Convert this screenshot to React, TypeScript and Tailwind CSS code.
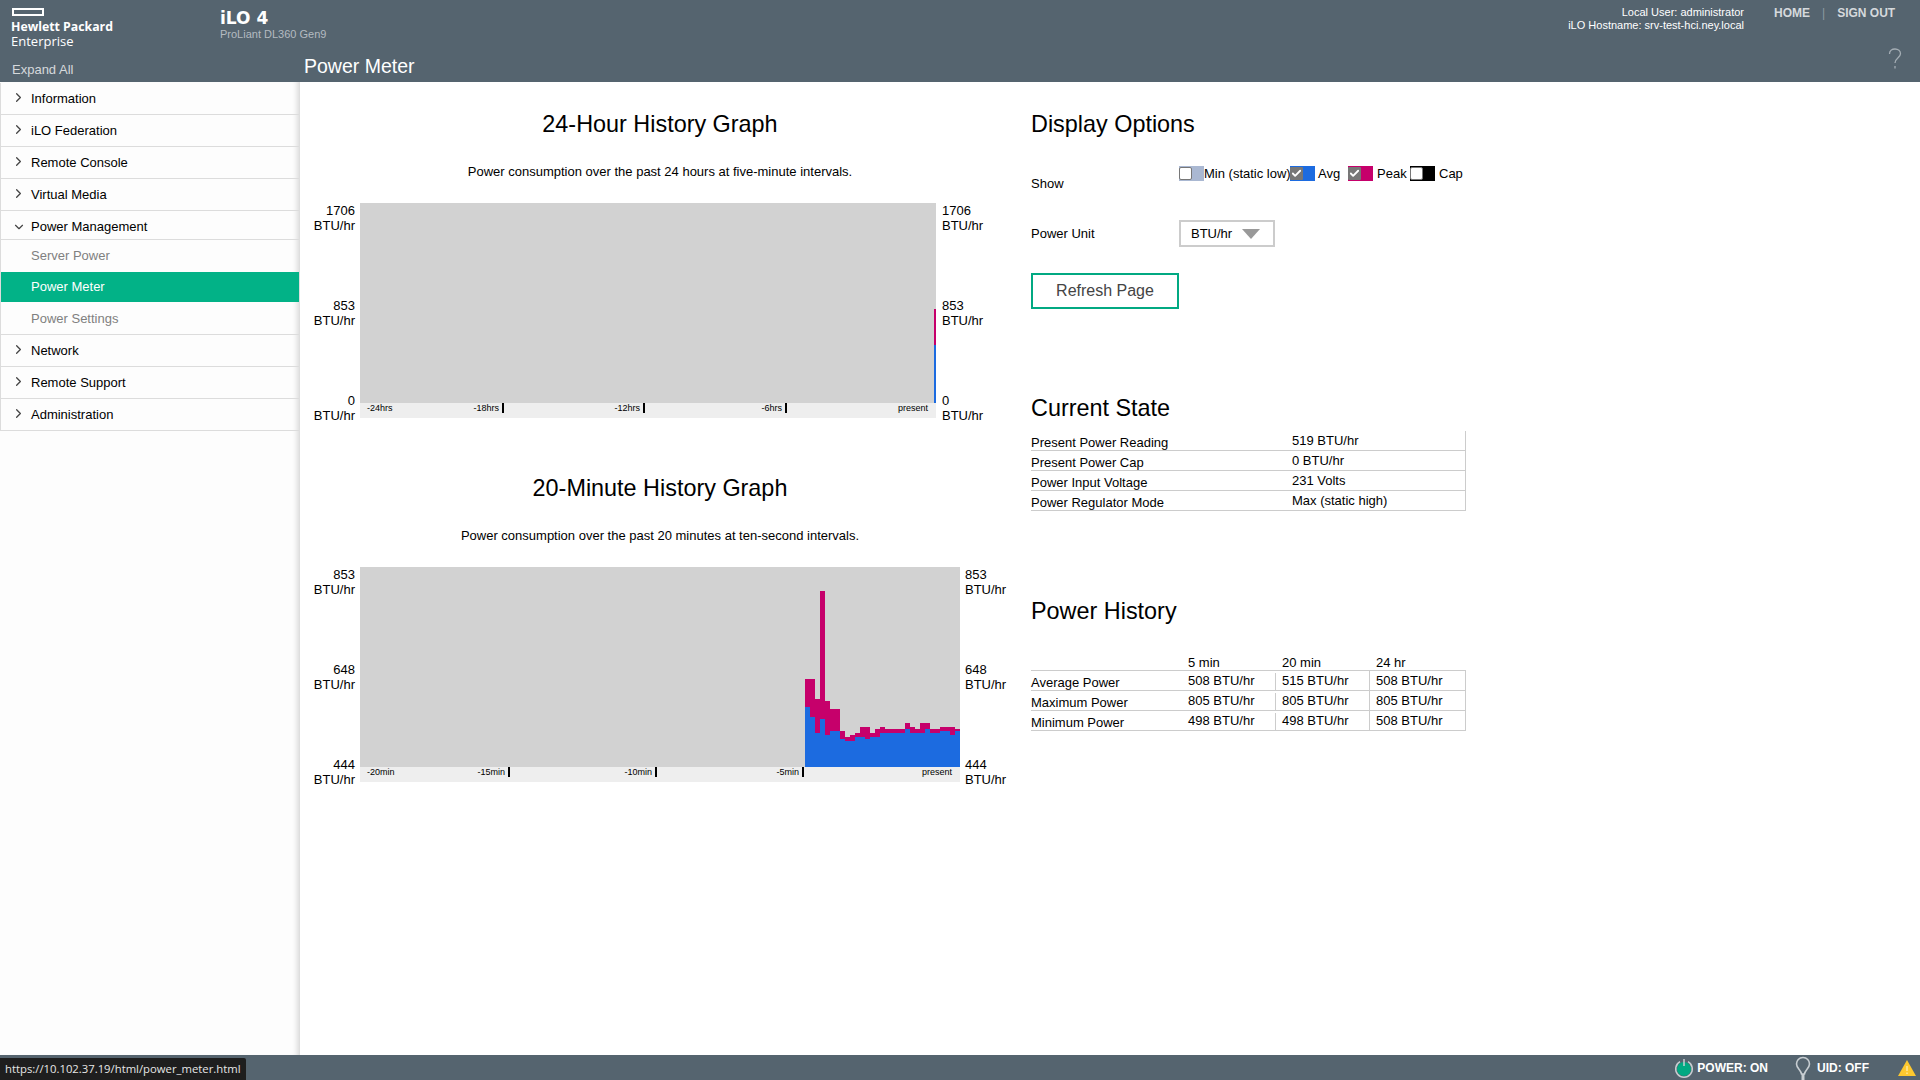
import React from "react";
import { ChevronDown, ChevronRight, Check } from "lucide-react";

const navTop = ["Information", "iLO Federation", "Remote Console", "Virtual Media"];
const navBottom = ["Network", "Remote Support", "Administration"];

// peak / avg heights of the 20 minute graph, 5px wide bars
const bars = [
  [88, 60], [88, 50], [68, 34], [176, 48], [66, 32], [58, 36], [58, 36], [36, 28],
  [30, 26], [32, 26], [34, 30], [40, 30], [40, 28], [34, 30], [38, 30], [40, 34],
  [38, 34], [38, 34], [38, 34], [38, 34], [44, 38], [40, 34], [38, 34], [44, 34],
  [44, 38], [38, 34], [38, 34], [40, 36], [40, 36], [40, 32], [38, 36],
];

const currentState = [
  ["Present Power Reading", "519 BTU/hr"],
  ["Present Power Cap", "0 BTU/hr"],
  ["Power Input Voltage", "231 Volts"],
  ["Power Regulator Mode", "Max (static high)"],
];

const powerHistory = [
  ["Average Power", "508 BTU/hr", "515 BTU/hr", "508 BTU/hr"],
  ["Maximum Power", "805 BTU/hr", "805 BTU/hr", "805 BTU/hr"],
  ["Minimum Power", "498 BTU/hr", "498 BTU/hr", "508 BTU/hr"],
];

function NavRow({ label }: { label: string }) {
  return (
    <div className="flex h-[32px] items-center border-b border-[#dcdcdc] text-black">
      <span className="flex w-[30px] justify-center pb-[3px] pl-[5px] text-[#444]">
        <ChevronRight size={15} />
      </span>
      <span>{label}</span>
    </div>
  );
}

function AxisLabels({ values, align }: { values: string[]; align: string }) {
  return (
    <div className={`flex h-[220px] flex-col justify-between leading-[15px] ${align}`}>
      {values.map((v) => (
        <div key={v}>
          {v}
          <br />
          BTU/hr
        </div>
      ))}
    </div>
  );
}

function TickCell({ label, width, first }: { label: string; width: string; first?: string }) {
  return (
    <div className={`flex h-[10px] items-center justify-between border-r-2 border-black pr-[3px] pl-[7px] ${width}`}>
      <span>{first}</span>
      <span>{label}</span>
    </div>
  );
}

function Graph24() {
  return (
    <div className="flex">
      <div className="w-[55px] text-right">
        <AxisLabels values={["1706", "853", "0"]} align="items-end" />
      </div>
      <div className="ml-[5px] w-[576px]">
        <div className="flex h-[200px] items-end justify-end bg-[#d2d2d2]">
          <div className="w-[2px]">
            <div className="h-[36px] bg-[#c6006b]" />
            <div className="h-[58px] bg-[#1c6be0]" />
          </div>
        </div>
        <div className="flex h-[15px] bg-[#eeeeee] text-[9px] leading-[10px]">
          <TickCell width="w-[144px]" first="-24hrs" label="-18hrs" />
          <TickCell width="w-[141px]" label="-12hrs" />
          <TickCell width="w-[142px]" label="-6hrs" />
          <div className="flex h-[10px] flex-1 items-center justify-end pr-[8px]">present</div>
        </div>
      </div>
      <div className="ml-[6px]">
        <AxisLabels values={["1706", "853", "0"]} align="items-start" />
      </div>
    </div>
  );
}

function Graph20() {
  return (
    <div className="flex">
      <div className="w-[55px] text-right">
        <AxisLabels values={["853", "648", "444"]} align="items-end" />
      </div>
      <div className="ml-[5px] w-[600px]">
        <div className="h-[200px] bg-[#d2d2d2]">
          <svg width="600" height="200" viewBox="0 0 600 200" className="block">
            {bars.map(([peak, avg], i) => (
              <g key={i}>
                <rect x={445 + i * 5} y={200 - peak} width="5" height={peak - avg} fill="#c6006b" />
                <rect x={445 + i * 5} y={200 - avg} width="5" height={avg} fill="#1c6be0" />
              </g>
            ))}
          </svg>
        </div>
        <div className="flex h-[15px] bg-[#eeeeee] text-[9px] leading-[10px]">
          <TickCell width="w-[150px]" first="-20min" label="-15min" />
          <TickCell width="w-[147px]" label="-10min" />
          <TickCell width="w-[147px]" label="-5min" />
          <div className="flex h-[10px] flex-1 items-center justify-end pr-[8px]">present</div>
        </div>
      </div>
      <div className="ml-[5px]">
        <AxisLabels values={["853", "648", "444"]} align="items-start" />
      </div>
    </div>
  );
}

function Legend({ label, swatch, checked, textClass }: { label: string; swatch: string; checked?: boolean; textClass: string }) {
  return (
    <>
      <span className={`flex h-[15px] w-[25px] shrink-0 items-center ${swatch}`}>
        {checked ? (
          <span className="flex h-[13px] w-[13px] items-center justify-center rounded-[1px] bg-[#777777] text-white">
            <Check size={11} strokeWidth={4} />
          </span>
        ) : (
          <span className="h-[13px] w-[13px] rounded-[2px] border border-[#777777] bg-white" />
        )}
      </span>
      <span className={`whitespace-nowrap ${textClass}`}>{label}</span>
    </>
  );
}

export default function App() {
  return (
    <div className="flex h-screen w-full flex-col overflow-hidden bg-white font-['Liberation_Sans',Arial,sans-serif] text-[13px] text-black">
      <header className="h-[82px] shrink-0 bg-[#55646f] text-white">
        <div className="flex h-[48px]">
          <div className="w-[220px] pt-[8px] pl-[11px]">
            <div className="ml-[1px] h-[8px] w-[32px] border-2 border-white" />
            <div className="mt-[4px] font-['Open_Sans',sans-serif] text-[12.3px] leading-[14px] font-bold">Hewlett Packard</div>
            <div className="font-['Open_Sans',sans-serif] text-[13px] leading-[14px]">Enterprise</div>
          </div>
          <div className="pt-[8px]">
            <div className="font-['DejaVu_Sans',sans-serif] text-[17px] leading-[20px] font-bold">iLO 4</div>
            <div className="text-[11px] leading-[13px] text-[#b4bbc1]">ProLiant DL360 Gen9</div>
          </div>
          <div className="ml-auto flex">
            <div className="pt-[6px] text-right text-[11px] leading-[13px]">
              <div>Local User: administrator</div>
              <div>iLO Hostname: srv-test-hci.ney.local</div>
            </div>
            <div className="ml-[30px] flex h-[25px] w-[146px] items-center text-[12px] font-bold text-[#d5d9dc]">
              <span>HOME</span>
              <span className="mx-[12px] font-normal text-[#8d99a2]">|</span>
              <span>SIGN OUT</span>
            </div>
          </div>
        </div>
        <div className="flex h-[34px] items-center">
          <div className="w-[300px] pt-[10px] pl-[12px] text-[13px] text-[#d5d9dc]">Expand All</div>
          <div className="pt-[3px] pl-[4px] text-[19.5px] text-white">Power Meter</div>
          <svg width="14" height="22" viewBox="0 0 14 22" className="mr-[18px] ml-auto self-start" fill="none" stroke="#a5aeb5" strokeWidth="1.3">
            <path d="M1.5 6 C1.5 2.8 4 1 7 1 C10 1 12.5 3 12.5 5.8 C12.5 9.5 7 10 7 15" />
            <path d="M7 18 V20.5" />
          </svg>
        </div>
      </header>

      <div className="flex min-h-0 flex-1">
        <aside className="w-[300px] shrink-0 bg-[#fdfdfd] pt-[1px] shadow-[inset_-7px_0_6px_-5px_rgba(0,0,0,0.18)]">
          <div className="w-[299px] border-l border-[#dcdcdc]">
            {navTop.map((n) => (
              <NavRow key={n} label={n} />
            ))}
            <div className="flex h-[29px] items-center border-b border-[#dcdcdc] pt-[3px]">
              <span className="flex w-[30px] justify-center pl-[5px] text-[#444]">
                <ChevronDown size={14} className="mt-[1px]" />
              </span>
              <span>Power Management</span>
            </div>
            <div className="flex h-[32px] items-center pl-[30px] text-[#808080]">Server Power</div>
            <div className="flex h-[30px] items-center bg-[#02b287] pl-[30px] text-white">Power Meter</div>
            <div className="flex h-[33px] items-center border-b border-[#dcdcdc] pt-[1px] pl-[30px] text-[#808080]">Power Settings</div>
            {navBottom.map((n) => (
              <NavRow key={n} label={n} />
            ))}
          </div>
        </aside>

        <main className="flex min-w-0 flex-1 pt-[22px]">
          <div className="w-[720px] shrink-0">
            <section className="h-[364px]">
              <h2 className="h-[40px] text-center text-[23.4px] leading-[40px]">24-Hour History Graph</h2>
              <p className="mt-[18px] h-[20px] text-center leading-[20px]">Power consumption over the past 24 hours at five-minute intervals.</p>
              <div className="mt-[21px]">
                <Graph24 />
              </div>
            </section>
            <section>
              <h2 className="h-[40px] text-center text-[23.4px] leading-[40px]">20-Minute History Graph</h2>
              <p className="mt-[18px] h-[20px] text-center leading-[20px]">Power consumption over the past 20 minutes at ten-second intervals.</p>
              <div className="mt-[21px]">
                <Graph20 />
              </div>
            </section>
          </div>

          <div className="ml-[11px] w-[435px]">
            <h2 className="h-[40px] text-[23.4px] leading-[40px]">Display Options</h2>
            <div className="mt-[20px] flex h-[38px]">
              <div className="w-[148px] pt-[12px] leading-[15px]">Show</div>
              <div className="flex h-[19px] items-center leading-[15px]">
                <Legend label="Min (static low)" swatch="bg-[#aab8d2]" textClass="w-[86px]" />
                <Legend label="Avg" swatch="bg-[#1c6be0]" checked textClass="w-[33px] pl-[3px]" />
                <Legend label="Peak" swatch="bg-[#c6006b]" checked textClass="w-[37px] pl-[4px]" />
                <Legend label="Cap" swatch="bg-black" textClass="pl-[4px]" />
              </div>
            </div>
            <div className="mt-[18px] flex h-[27px] items-center">
              <div className="w-[148px] pt-[1px]">Power Unit</div>
              <div className="flex h-[27px] w-[96px] items-center border-2 border-[#cccccc] pl-[10px]">
                <span>BTU/hr</span>
                <span className="ml-[10px] h-0 w-0 border-x-[9px] border-t-[10px] border-x-transparent border-t-[#999999]" />
              </div>
            </div>
            <button className="mt-[26px] h-[36px] w-[148px] border-[2px] border-[#01a982] bg-white text-[16px] text-[#444444]">Refresh Page</button>

            <h2 className="mt-[79px] h-[40px] text-[23.4px] leading-[40px]">Current State</h2>
            <div className="mt-[3px] border-r border-[#cccccc]">
              {currentState.map(([k, v]) => (
                <div key={k} className="flex h-[20px] border-b border-[#cccccc] leading-[15px]">
                  <span className="w-[261px] self-end">{k}</span>
                  <span className="mt-[2px]">{v}</span>
                </div>
              ))}
            </div>

            <h2 className="mt-[80px] h-[40px] text-[23.4px] leading-[40px]">Power History</h2>
            <div className="mt-[20px] flex h-[20px] items-center border-b border-[#cccccc] pt-[3px] leading-[15px]">
              <span className="w-[157px]" />
              <span className="w-[94px]">5 min</span>
              <span className="w-[94px]">20 min</span>
              <span>24 hr</span>
            </div>
            <div className="border-r border-[#cccccc]">
              {powerHistory.map(([k, a, b, c]) => (
                <div key={k} className="flex h-[20px] border-b border-[#cccccc] leading-[15px]">
                  <span className="w-[157px] self-end">{k}</span>
                  <span className="mt-[2px] h-[17px] w-[88px] border-r border-[#cccccc]">{a}</span>
                  <span className="h-[19px] w-[94px] border-r border-[#cccccc] pt-[2px] pl-[6px]">{b}</span>
                  <span className="mt-[2px] pl-[6px]">{c}</span>
                </div>
              ))}
            </div>
          </div>
        </main>
      </div>

      <footer className="flex h-[25px] shrink-0 items-center bg-[#55646f] text-[12px] font-bold text-white">
        <div className="flex h-full w-[246px] items-end">
          <div className="flex h-[22px] w-full items-center rounded-tr-[2px] bg-[#1e1e1e] pl-[5px] font-['Open_Sans',sans-serif] text-[11.3px] font-normal whitespace-nowrap text-[#e6e6e6]">
            https://10.102.37.19/html/power_meter.html
          </div>
        </div>
        <div className="ml-auto flex items-center">
          <svg width="20" height="20" viewBox="0 0 20 20">
            <circle cx="10" cy="11" r="7" fill="#01a982" />
            <path d="M6 3.6 A8.3 8.3 0 1 0 14 3.6" fill="none" stroke="#c8ced2" strokeWidth="1.5" />
            <path d="M10 1 V8" stroke="#c8ced2" strokeWidth="1.5" />
          </svg>
          <span className="ml-[3px]">POWER: ON</span>
          <svg width="16" height="24" viewBox="0 0 16 24" className="ml-[27px]">
            <path d="M8 1.5 C4 1.5 1.5 4.5 1.5 8 C1.5 12 6 14 6.5 18 H9.5 C10 14 14.5 12 14.5 8 C14.5 4.5 12 1.5 8 1.5 Z" fill="none" stroke="#c8ced2" strokeWidth="1.6" />
            <path d="M8 18 V24" stroke="#c8ced2" strokeWidth="3" />
          </svg>
          <span className="ml-[6px]">UID: OFF</span>
          <svg width="20" height="18" viewBox="0 0 20 18" className="mr-[3px] ml-[28px]">
            <path d="M10 1 L19 17 H1 Z" fill="#fdc82f" />
            <path d="M10 7 V12 M10 13.5 V15" stroke="#fff1b8" strokeWidth="1.2" />
          </svg>
        </div>
      </footer>
    </div>
  );
}
